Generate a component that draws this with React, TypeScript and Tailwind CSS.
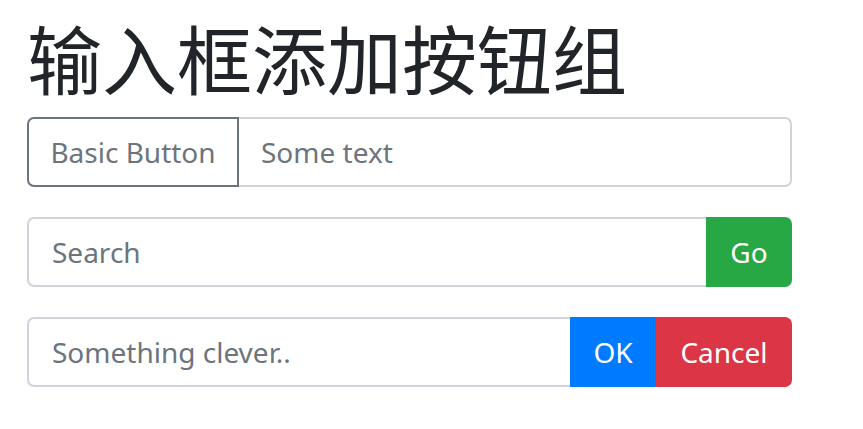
import React from "react";

const font = { fontFamily: '"Noto Sans", "Open Sans", sans-serif' };

export default function App() {
  return (
    <div className="bg-white w-[863px] h-[429px] px-[27px] pt-[12px]" style={font}>
      <h1
        className="text-[75px] leading-[90px] text-[#212529] font-normal mb-[15px]"
        style={{ fontFamily: '"Noto Sans CJK SC", "Noto Sans", sans-serif' }}
      >
        输入框添加按钮组
      </h1>
      <div className="flex flex-col gap-[30px] w-[765px]">
        <div className="flex h-[70px]">
          <button className="w-[212px] shrink-0 h-full border-2 border-[#6c757d] rounded-l-[7px] text-[#6c757d] text-[28px] bg-white">
            Basic Button
          </button>
          <input
            className="flex-1 min-w-0 h-full border-2 border-l-0 border-[#ced4da] rounded-r-[7px] px-[22px] text-[28px] text-[#495057] placeholder:text-[#6c757d] outline-none"
            placeholder="Some text"
          />
        </div>
        <div className="flex h-[70px]">
          <input
            className="flex-1 min-w-0 h-full border-2 border-r-0 border-[#ced4da] rounded-l-[7px] px-[23px] text-[28px] text-[#495057] placeholder:text-[#6c757d] outline-none"
            placeholder="Search"
          />
          <button className="w-[86px] shrink-0 h-full bg-[#28a745] text-white text-[28px] rounded-r-[7px]">
            Go
          </button>
        </div>
        <div className="flex h-[70px]">
          <input
            className="flex-1 min-w-0 h-full border-2 border-r-0 border-[#ced4da] rounded-l-[7px] px-[23px] text-[28px] text-[#495057] placeholder:text-[#6c757d] outline-none"
            placeholder="Something clever.."
          />
          <button className="w-[86px] shrink-0 h-full bg-[#007bff] text-white text-[28px]">
            OK
          </button>
          <button className="w-[136px] shrink-0 h-full bg-[#dc3545] text-white text-[28px] rounded-r-[7px]">
            Cancel
          </button>
        </div>
      </div>
    </div>
  );
}
